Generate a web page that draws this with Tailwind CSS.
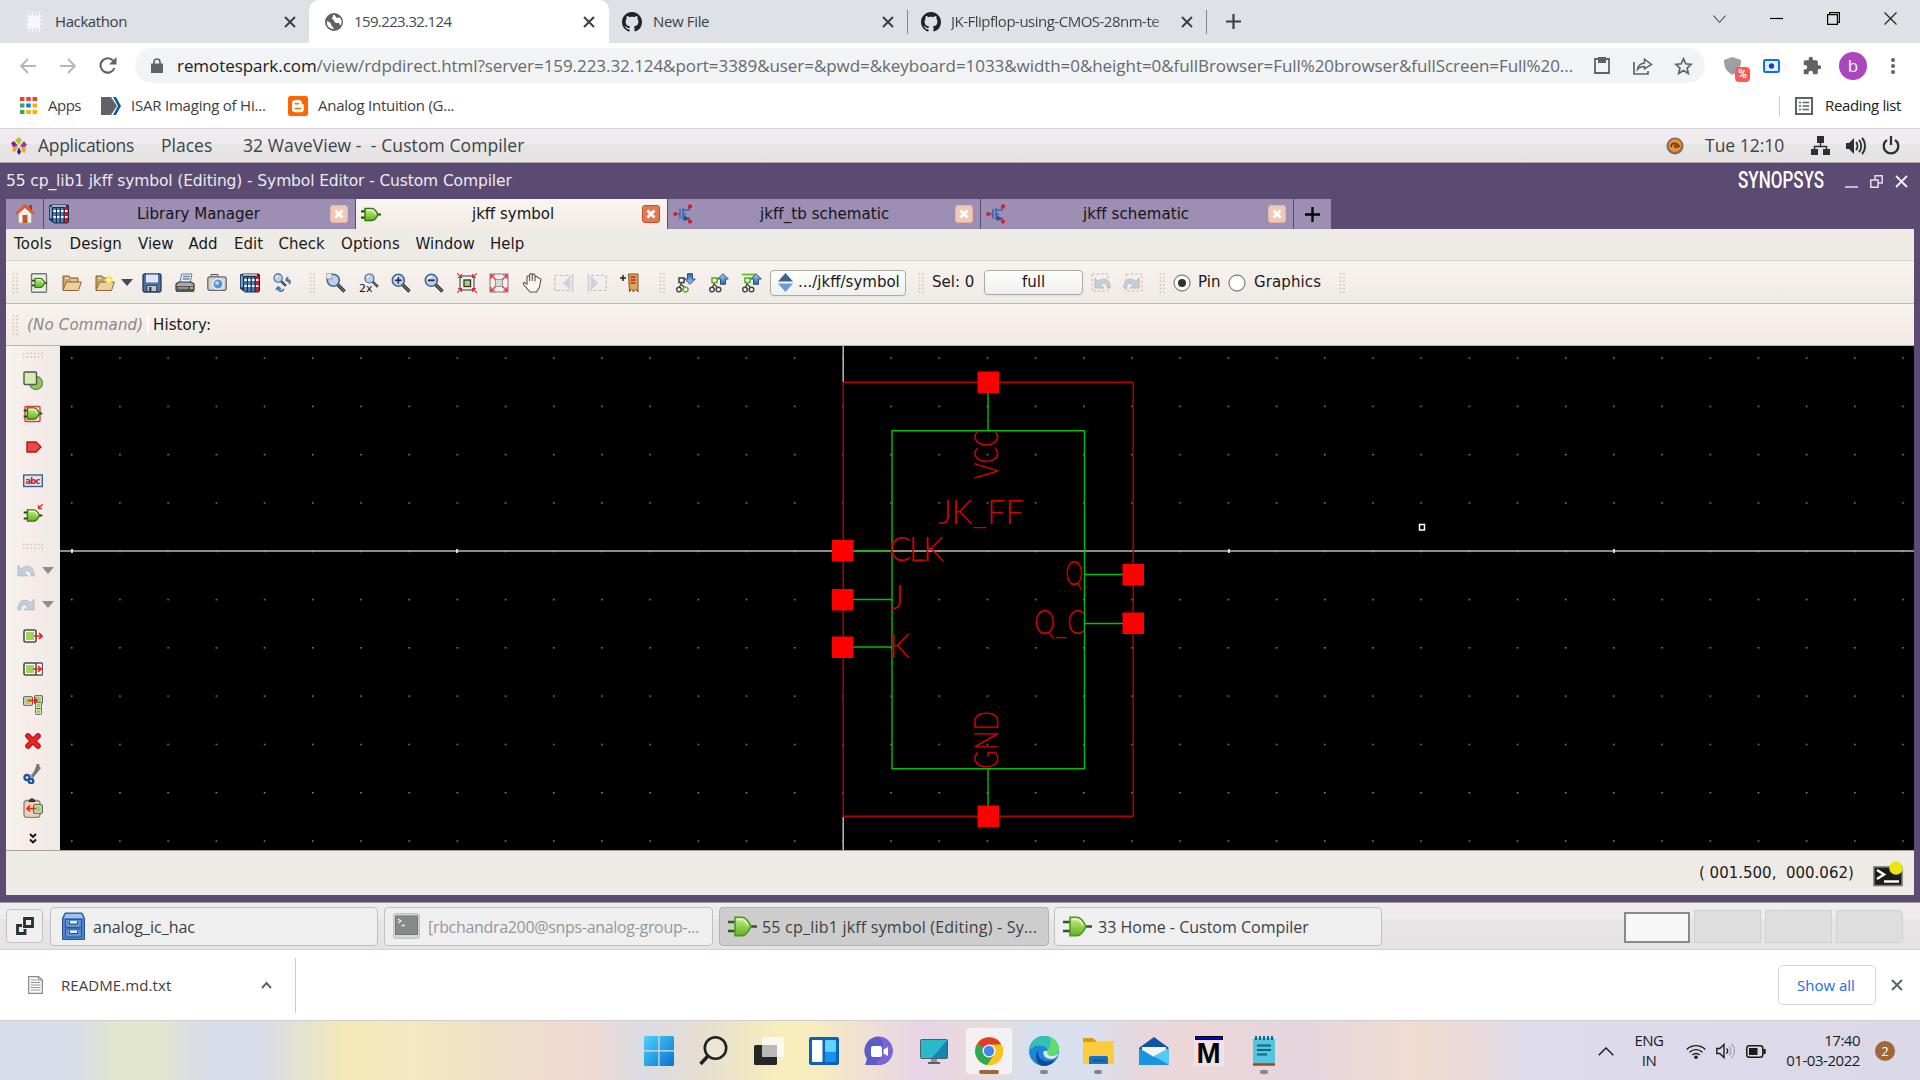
<!DOCTYPE html>
<html lang="en">
<head>
<meta charset="utf-8">
<title>159.223.32.124</title>
<script src="https://cdn.jsdelivr.net/npm/@tailwindcss/browser@4"></script>
</head>
<body class="w-[1920px] h-[1080px] overflow-hidden bg-white">
<svg class="absolute size-0">
  <defs>
    <linearGradient id="gGreen" x1="0" y1="0" x2="0" y2="1"><stop offset="0" stop-color="#c8f08a"/><stop offset="1" stop-color="#63b01e"/></linearGradient>
    <linearGradient id="gBlue" x1="0" y1="0" x2="0" y2="1"><stop offset="0" stop-color="#a8c8ec"/><stop offset="1" stop-color="#2f6aa8"/></linearGradient>
    <linearGradient id="gWin" x1="0" y1="0" x2="1" y2="1"><stop offset="0" stop-color="#4fd2fb"/><stop offset="1" stop-color="#0572d2"/></linearGradient>
  </defs>
  <symbol id="x" viewBox="0 0 12 12"><path d="M1 1l10 10M11 1L1 11" stroke="currentColor" stroke-width="2" fill="none"/></symbol>
  <symbol id="github" viewBox="0 0 16 16"><path fill="#1f2328" d="M8 0C3.58 0 0 3.58 0 8c0 3.54 2.29 6.53 5.47 7.59.4.07.55-.17.55-.38 0-.19-.01-.82-.01-1.49-2.01.37-2.53-.49-2.69-.94-.09-.23-.48-.94-.82-1.13-.28-.15-.68-.52-.01-.53.63-.01 1.08.58 1.23.82.72 1.21 1.87.87 2.33.66.07-.52.28-.87.51-1.07-1.78-.2-3.64-.89-3.64-3.95 0-.87.31-1.59.82-2.15-.08-.2-.36-1.02.08-2.12 0 0 .67-.21 2.2.82.64-.18 1.32-.27 2-.27s1.36.09 2 .27c1.53-1.04 2.2-.82 2.2-.82.44 1.1.16 1.92.08 2.12.51.56.82 1.27.82 2.15 0 3.07-1.87 3.75-3.65 3.95.29.25.54.73.54 1.48 0 1.07-.01 1.93-.01 2.2 0 .21.15.46.55.38A8.01 8.01 0 0016 8c0-4.42-3.58-8-8-8z"/></symbol>
  <symbol id="tabx" viewBox="0 0 18 18"><rect x=".5" y=".5" width="17" height="17" rx="2.500" fill="#e07a50" stroke="#cc4a32"/><path d="M5.500 5.500l7 7M12.500 5.500l-7 7" stroke="#fff" stroke-width="2.800"/></symbol>
  <symbol id="tabxoff" viewBox="0 0 18 18"><rect x=".5" y=".5" width="17" height="17" rx="2.500" fill="#efc8b6" stroke="#e6b3a8"/><path d="M5.500 5.500l7 7M12.500 5.500l-7 7" stroke="#fff" stroke-width="2.800"/></symbol>
  <symbol id="gate" viewBox="0 0 20 14"><path d="M0 3.800h5M0 10.200h5M14 7h6" stroke="#1f4a0e" stroke-width="2.200"/><path d="M4 .9h7c3 0 4.500 3 6 6.100-1.500 3.100-3 6.100-6 6.100H4z" fill="url(#gGreen)" stroke="#2f7a0c" stroke-width="1.500"/><path d="M5.800 2.600h5c1.800 0 3 1.600 4 4.400" stroke="#effcd8" stroke-width="1.200" fill="none"/></symbol>
  <symbol id="mos" viewBox="0 0 20 20"><path d="M3 10h4M7 5v10M10 4v12M10 6h6V2M10 14h6v4M10 10h3" stroke="#3a68b0" stroke-width="1.600" fill="none"/><path d="M11 11l5 4-5 2z" fill="#2b4d90"/><circle cx="2.300" cy="10" r="2.100" fill="#dc1c24"/><circle cx="17" cy="2.400" r="2.100" fill="#dc1c24"/><circle cx="17" cy="17.600" r="2.100" fill="#dc1c24"/></symbol>
  <symbol id="books" viewBox="0 0 20 20"><path d="M0 1.500L3 .5h16l1 1.500v16l-1.500 1.500H5L0 15.500z" fill="#1c2d48"/><path d="M1.800 2.500v12" stroke="#7fa9d8" stroke-width="2"/><path d="M5.500 4v14.500M9.300 4v14.500M13.100 4v14.500" stroke="#4a80c0" stroke-width="2.500"/><path d="M17.200 3v15.500" stroke="#de1a22" stroke-width="3"/><path d="M4.300 7h2.500M8 7h2.500M12 7h2.500M16 7h2.500M4.300 13h2.500M8 13h2.500M12 13h2.500M16 13h2.500" stroke="#fff" stroke-width="1.800"/><path d="M3 2h14" stroke="#d7dfe8" stroke-width="1.500"/></symbol>
  <symbol id="folder" viewBox="0 0 20 18"><path d="M1 16V2h6l1.500 2H16v4" fill="#c9a56c" stroke="#7d5f33"/><path d="M1 16.500L4.500 8H19.300l-2.800 8.500z" fill="#edcf97" stroke="#8a6a3c"/><path d="M3 4h4M9 6h6" stroke="#f7eedb"/></symbol>
  <symbol id="mag" viewBox="0 0 20 20"><path d="M11.500 11.500l7 7" stroke="#333" stroke-width="3.400"/><path d="M12 12l6 6" stroke="#999" stroke-width="1"/><circle cx="7.300" cy="7.300" r="6" fill="#b9d1ee" stroke="#4a6488" stroke-width="1.600"/><path d="M4 6.500a3.600 3.600 0 0 1 3.300-2.700" stroke="#fff" stroke-width="1.500" fill="none"/></symbol>
  <symbol id="tree" viewBox="0 0 20 20"><path d="M5 7v4M5 11l-2 4M5 11l4 4" stroke="#444" stroke-width="1.300" fill="none"/><rect x="3" y="5" width="5" height="4.500" fill="#fff" stroke="currentColor" stroke-width="1.600"/><circle cx="3" cy="16.500" r="2.300" fill="#fff" stroke="#444" stroke-width="1.500"/><circle cx="9.500" cy="16.500" r="2.300" fill="#fff" stroke="#444" stroke-width="1.500"/></symbol>
  <symbol id="aup" viewBox="0 0 12 12"><path d="M6 .7L11.300 6H8.500v5.300h-5V6H.700z" fill="url(#gBlue)" stroke="#27507f"/></symbol>
  <symbol id="undo" viewBox="0 0 20 14"><path d="M1 1v12h11L8 9.500C11 6 15 6 16 13h3C20 3 11-1 5 5z" fill="#c3cedb" stroke="#a9b4c4" stroke-width=".8"/></symbol>
  <symbol id="grip" viewBox="0 0 6 20"><path d="M1.500 0v20M5 0v20" stroke="#c9c3bb" stroke-width="1.500" stroke-dasharray="1.500 2.200"/></symbol>
  <symbol id="hgrip" viewBox="0 0 20 6"><path d="M0 1.500h20M0 5h20" stroke="#c9c3bb" stroke-width="1.500" stroke-dasharray="1.500 2.200"/></symbol>
  <symbol id="gbox" viewBox="0 0 14 14"><rect x="1" y="1" width="12" height="12" rx="1.500" fill="#fff" stroke="#4a4a4a" stroke-width="1.600"/><rect x="3" y="3" width="8" height="8" fill="#9fd45a"/></symbol>
  <symbol id="biggate" viewBox="0 0 29 21"><path d="M0 6h9M0 15h9M20 10.500h9" stroke="#2f5a18" stroke-width="2.600"/><path d="M7 1.200h7c4 0 7 5 9 9.300-2 4.300-5 9.300-9 9.300H7z" fill="url(#gGreen)" stroke="#4a9a20" stroke-width="1.600"/><path d="M9 3.500h5c2.500 0 5 3.500 6 6" stroke="#effcd8" stroke-width="1.600" fill="none"/></symbol>
</svg>

<!-- browser tab strip -->
<div class="flex h-[43px] bg-[#dee1e6] font-['Open_Sans',sans-serif] text-[15px] text-[#3c4043]">
  <div class="flex w-[309px] items-center rounded-br-lg pl-[25px]">
    <svg class="h-5 w-[18px]" viewBox="0 0 18 20"><path d="M4 0v20M7.500 0v20M11 0v20M14.500 0v20M0 4h18M0 8h18M0 12h18M0 16h18" stroke="#f6f4fc"/><rect x="3" y="4" width="12" height="12" fill="#f8f6fd"/></svg>
    <span class="ml-3 w-[71px] whitespace-nowrap tracking-[-0.4px]">Hackathon</span>
    <svg class="ml-[158px] size-[12px]"><use href="#x"/></svg>
  </div>
  <div class="flex w-[300px] items-center rounded-t-[10px] bg-white pl-4">
    <svg class="size-[18px]" viewBox="0 0 18 18"><circle cx="9" cy="9" r="9" fill="#5f6368"/><path d="M2 8c2 1 3 1 4 3 0 2 2 2 3 5-4 0-8-3-7-8zM8 2c3 0 2 2 4 3 1 0 2-1 3 0 2 2 2 4 1 7-2 0-1-2-3-2-2 0-3 0-4-2 0-2-2-1-2-3 1-1 1-2 1-3z" fill="#fff"/></svg>
    <span class="ml-[11px] w-[98px] whitespace-nowrap tracking-[-0.62px] text-[#45494d]">159.223.32.124</span>
    <svg class="ml-[131px] size-[12px]"><use href="#x"/></svg>
  </div>
  <div class="flex w-[298px] items-center pl-[13px]">
    <svg class="size-5"><use href="#github"/></svg>
    <span class="ml-[11px] w-[56px] whitespace-nowrap tracking-[-0.35px]">New File</span>
    <svg class="ml-[173px] size-[12px]"><use href="#x"/></svg>
  </div>
  <div class="flex w-[300px] items-center">
    <div class="h-6 w-px bg-[#80868b]"></div>
    <svg class="ml-[13px] size-5"><use href="#github"/></svg>
    <span class="ml-[10px] w-[222px] whitespace-nowrap bg-linear-to-r from-[#3c4043] from-90% to-transparent bg-clip-text tracking-[-0.5px] text-transparent">JK-Flipflop-using-CMOS-28nm-te</span>
    <svg class="ml-[8px] size-[12px]"><use href="#x"/></svg>
    <div class="ml-[13px] h-6 w-px bg-[#80868b]"></div>
  </div>
  <div class="flex flex-1 items-center pl-[19px]">
    <svg class="size-[15px]" viewBox="0 0 15 15"><path d="M7.500 0v15M0 7.500h15" stroke="#3c4043" stroke-width="2.200"/></svg>
  </div>
  <div class="flex w-[214px] items-start gap-[44px] pt-3">
    <svg class="mt-px ml-[7px] h-3 w-[13px]" viewBox="0 0 13 12"><path d="M.5 2.500l6 7 6-7" fill="none" stroke="#222"/></svg>
    <svg class="h-3 w-[13px]" viewBox="0 0 13 12"><path d="M0 6.500h13" stroke="#000" stroke-width="1.200"/></svg>
    <svg class="h-[13px] w-[13px]" viewBox="0 0 13 13"><path d="M.6 2.600h9.800v9.800H.6zM2.600 2.600V.6h9.800v9.800h-2" fill="none" stroke="#000" stroke-width="1.200"/></svg>
    <svg class="h-[13px] w-[13px]" viewBox="0 0 13 13"><path d="M.5.5l12 12M12.500.5l-12 12" stroke="#222" stroke-width="1.200"/></svg>
  </div>
</div>

<!-- address bar -->
<div class="flex h-[45px] items-center pl-5 font-['Open_Sans',sans-serif]">
  <svg class="h-4 w-4" viewBox="0 0 16 16"><path d="M16 8H1M8 1L1 8l7 7" fill="none" stroke="#b4b6b9" stroke-width="1.800"/></svg>
  <svg class="ml-6 h-4 w-4" viewBox="0 0 16 16"><path d="M0 8h15M8 1l7 7-7 7" fill="none" stroke="#b4b6b9" stroke-width="1.800"/></svg>
  <svg class="ml-[23px] h-[17px] w-[18px]" viewBox="0 0 18 17"><path d="M15.500 11A7.200 7.200 0 1 1 14 3.500" fill="none" stroke="#5f6368" stroke-width="2.100"/><path d="M17.500 0v7.500H10z" fill="#5f6368"/></svg>
  <div class="ml-[18px] flex h-[35px] w-[1570px] items-center rounded-full bg-[#f1f3f4] pl-4">
    <svg class="h-[15px] w-[12px]" viewBox="0 0 12 15"><path d="M0 5.500h12V15H0z" fill="#5f6368"/><path d="M3 6V4a3 3 0 0 1 6 0v2" fill="none" stroke="#5f6368" stroke-width="1.600"/></svg>
    <span class="ml-[14px] w-[1395px] whitespace-nowrap text-[17px] tracking-[-0.06px] text-[#65696e]"><span class="text-[#202124]">remotespark.com</span>/view/rdpdirect.html?server=159.223.32.124&amp;port=3389&amp;user=&amp;pwd=&amp;keyboard=1033&amp;width=0&amp;height=0&amp;fullBrowser=Full%20browser&amp;fullScreen=Full%20...</span>
    <svg class="ml-[22px] h-[17px] w-[16px]" viewBox="0 0 16 17"><path d="M1 2h14v14H1z" fill="none" stroke="#5f6368" stroke-width="1.800"/><path d="M4 0h8v6H4z" fill="#5f6368"/></svg>
    <svg class="ml-[23px] h-[18px] w-[20px]" viewBox="0 0 20 18"><path d="M1 5v12h14v-3" fill="none" stroke="#5f6368" stroke-width="1.700"/><path d="M4.500 12.500c.5-4 3-6 7-6.500V2.200L18.500 7.500 11.500 12V9.500c-3 0-5 .5-7 3z" fill="none" stroke="#5f6368" stroke-width="1.500"/></svg>
    <svg class="ml-[21px] h-[18px] w-[19px]" viewBox="0 0 19 18"><path d="M9.500 1.800l2.300 5 5.300.6-4 3.600 1.200 5.500-4.800-2.900-4.800 2.900 1.200-5.500-4-3.600 5.300-.6z" fill="none" stroke="#5f6368" stroke-width="1.700"/></svg>
  </div>
  <div class="relative mt-1 ml-[19px] h-[22px] w-[26px]">
    <svg class="h-[18px] w-[17px]" viewBox="0 0 17 18"><path d="M8.500 0L17 3c0 8-3 12-8.500 15C3 15 0 11 0 3z" fill="#9aa0a6"/></svg>
    <div class="absolute top-[10px] left-[11px] flex h-[15px] w-[15px] items-center justify-center rounded-sm bg-[#fb5a55] font-['Roboto',sans-serif] text-[12px] leading-none font-bold text-white">%</div>
  </div>
  <svg class="ml-[13px] h-[14px] w-[17px]" viewBox="0 0 17 14"><rect x="1" y="1" width="15" height="12" rx="1.500" fill="#e4f0ff" stroke="#0e71eb" stroke-width="2"/><circle cx="8.500" cy="7" r="2.700" fill="#1d3fbe"/></svg>
  <svg class="ml-[22px] h-[20px] w-[20px]" viewBox="0 0 24 24"><path fill="#5f6368" d="M20.500 11H19V7a2 2 0 0 0-2-2h-4V3.500a2.500 2.500 0 0 0-5 0V5H4a2 2 0 0 0-2 2v3.800h1.500a2.700 2.700 0 0 1 0 5.400H2V20c0 1.100.9 2 2 2h3.800v-1.500a2.700 2.700 0 0 1 5.400 0V22H17a2 2 0 0 0 2-2v-4h1.500a2.500 2.500 0 0 0 0-5z"/></svg>
  <div class="ml-[17px] flex size-7 items-center justify-center rounded-full bg-[#ab47bc] text-[17px] leading-none text-white">b</div>
  <svg class="ml-6 h-4 w-[4px]" viewBox="0 0 4 16"><circle cx="2" cy="2" r="2" fill="#5f6368"/><circle cx="2" cy="8" r="2" fill="#5f6368"/><circle cx="2" cy="14" r="2" fill="#5f6368"/></svg>
</div>

<!-- bookmarks -->
<div class="flex h-[41px] items-center border-b border-[#d4d4d6] pb-[5px] pl-5 font-['Open_Sans',sans-serif] text-[15px] text-[#3c4043]">
  <svg class="h-[17px] w-[17px]" viewBox="0 0 17 17"><path d="M0 2h17" stroke="#ea4335" stroke-width="4" stroke-dasharray="4.500 1.750"/><path d="M0 8.500h4.500" stroke="#34a853" stroke-width="4"/><path d="M6.250 8.500h4.500" stroke="#1a73e8" stroke-width="4"/><path d="M12.500 8.500H17M6.250 15h4.500M12.500 15H17" stroke="#fbaf04" stroke-width="4"/><path d="M0 15h4.500" stroke="#34a853" stroke-width="4"/></svg>
  <span class="ml-[11px] w-[33px] whitespace-nowrap tracking-[-0.5px]">Apps</span>
  <svg class="ml-5 h-[18px] w-[20px]" viewBox="0 0 20 18"><path d="M0 0h10l6 9-6 9H0z" fill="#5f6368"/><path d="M12 0h3l5 9-5 9h-3l5-9z" fill="#0c5aa6"/></svg>
  <span class="ml-[10px] w-[137px] whitespace-nowrap tracking-[-0.22px]">ISAR Imaging of Hi...</span>
  <svg class="ml-[20px] size-5" viewBox="0 0 20 20"><rect width="20" height="20" rx="2.500" fill="#ff6600"/><path d="M7 4h3.500a3.500 3.500 0 0 1 3.500 3.500c0 1 1.800 0 1.800 2V13a3.300 3.300 0 0 1-3.300 3.300H7.300A3.300 3.300 0 0 1 4 13V7a3 3 0 0 1 3-3z" fill="#fff"/><path d="M7.300 7.800h3M7.300 12.500h5" stroke="#ff6600" stroke-width="1.500" stroke-linecap="round"/></svg>
  <span class="ml-[10px] w-[136px] whitespace-nowrap tracking-[-0.26px]">Analog Intuition (G...</span>
  <div class="ml-auto h-5 w-px bg-[#c8cacd]"></div>
  <svg class="ml-[15px] h-[18px] w-[18px]" viewBox="0 0 18 18"><rect x="1" y="1" width="16" height="16" fill="none" stroke="#5f6368" stroke-width="2"/><path d="M4 5.500h2M4 9h2M4 12.500h2M7.500 5.500H14M7.500 9H14M7.500 12.500H14" stroke="#5f6368" stroke-width="1.600"/></svg>
  <span class="mr-[20px] ml-3 w-[75px] whitespace-nowrap tracking-[-0.35px] text-[#202124]">Reading list</span>
</div>

<!-- desktop top panel -->
<div class="flex h-[34px] items-center border-b border-[#a9a8a9] bg-linear-to-b from-[#efebee] from-45% via-[#e6e6e6] via-46% to-[#e6e2e5] pl-[10px] font-['Open_Sans',sans-serif] text-[17.500px] text-[#3d4447]">
  <svg class="h-[18px] w-[18px]" viewBox="0 0 18 18"><path d="M9 8L5 3l4-3 3 3z" fill="#b0c93b"/><path d="M8 9L3 10 1 6l3-2z" fill="#932279"/><path d="M10 9l4-5 3 4-3 3z" fill="#9b3f94"/><path d="M8 10l-3 5-3-1 1-4z" fill="#e8a91f"/><path d="M11 10l5 1-1 5-3-1z" fill="#efa724"/><path d="M9 10l2 5-2 3-2-3z" fill="#262577"/></svg>
  <span class="ml-[10px] w-[95px] whitespace-nowrap tracking-[-0.3px]">Applications</span>
  <span class="ml-7 w-[51px] whitespace-nowrap">Places</span>
  <span class="ml-[31px] w-[283px] whitespace-pre tracking-[0.09px]">32 WaveView -  - Custom Compiler</span>
  <svg class="ml-auto size-[18px]" viewBox="0 0 18 18"><circle cx="9" cy="9" r="8.500" fill="#77706a"/><circle cx="9" cy="8.500" r="6.500" fill="#ee8f2c"/><path d="M5 10c0-4 5-5 7-2-2-1-4 0-3 2 2 1 4 0 4-2" stroke="#6a3c10" stroke-width="1.600" fill="none"/></svg>
  <span class="ml-[21px] w-[81px] whitespace-nowrap">Tue 12:10</span>
  <svg class="ml-[25px] h-[19px] w-[19px]" viewBox="0 0 19 19"><path d="M6 0h7v7H6zM0 13h7v6H0zM12 13h7v6h-7z" fill="#2a3133"/><path d="M9.500 7v3.500M3.500 13v-2.500h12V13" stroke="#2a3133" stroke-width="1.500" fill="none"/></svg>
  <svg class="ml-4 h-[18px] w-[20px]" viewBox="0 0 20 18"><path d="M0 6h3l5-5v16l-5-5H0z" fill="#2a3133"/><path d="M10 5c2 2 2 6 0 8M13 3c3 3 3 9 0 12M16 1c4 4 4 12 0 16" stroke="#2a3133" stroke-width="1.800" fill="none"/></svg>
  <svg class="mr-[20px] ml-4 h-[19px] w-[18px]" viewBox="0 0 18 19"><path d="M5 4a7.300 7.300 0 1 0 8 0M9 0v9" stroke="#2a3133" stroke-width="2.300" fill="none"/></svg>
</div>

<!-- Custom Compiler window -->
<div class="flex h-[739px] flex-col border-x-[6px] border-t border-b-[7px] border-[#5b4a72] bg-[#eeebe7] font-['DejaVu_Sans',sans-serif] text-[15px] text-[#1a1a1a]">
  <div class="flex h-[35px] items-center bg-[#5b4a72] text-[15.500px] text-[#eceaf0]">
    <span class="w-[506px] whitespace-nowrap tracking-[-0.12px]">55 cp_lib1 jkff symbol (Editing) - Symbol Editor - Custom Compiler</span>
    <svg class="ml-auto h-[30px] w-[90px]" viewBox="0 0 90 30"><text x="2" y="21" textLength="86" lengthAdjust="spacingAndGlyphs" font-family="Roboto, sans-serif" font-weight="500" font-size="23" fill="#fff">SYNOPSYS</text></svg>
    <svg class="ml-[19px] h-[13px] w-[13px]" viewBox="0 0 13 13"><path d="M0 12h13" stroke="#e4e0ea" stroke-width="1.500"/></svg>
    <svg class="ml-3 h-[13px] w-[13px]" viewBox="0 0 13 13"><path d="M.8 5h7.200v7.200H.8zM5 5V.8h7.200V8H8" fill="none" stroke="#e4e0ea" stroke-width="1.500"/></svg>
    <svg class="mr-[6px] ml-3 h-[13px] w-[13px]" viewBox="0 0 13 13"><path d="M1 1l11 11M12 1L1 12" stroke="#f4f2f6" stroke-width="1.800"/></svg>
  </div>
  <div class="flex h-[30px] gap-px bg-[#5b4a72] text-[15px] text-[#141414]">
    <div class="flex w-[37px] items-center justify-center bg-[#9d8eb4]">
      <svg class="size-5" viewBox="0 0 20 20"><path d="M3.500 9L10 3.500 16.500 9v10h-13z" fill="#f4f1ee" stroke="#aaa"/><path d="M14 1h3v5h-3z" fill="#b83a12"/><path d="M1 10L10 2l9 8" fill="none" stroke="#e0592a" stroke-width="3"/><path d="M7.500 11h5v8h-5z" fill="#c05a1c"/></svg>
    </div>
    <div class="flex w-[311px] items-center bg-[#9d8eb4] pl-[5px]">
      <svg class="size-5"><use href="#books"/></svg>
      <span class="mt-px ml-[68px] w-[125px] whitespace-nowrap">Library Manager</span>
      <svg class="ml-[68px] size-[18px]"><use href="#tabxoff"/></svg>
    </div>
    <div class="flex w-[311px] items-center bg-linear-to-b from-[#f8f5f1] to-[#f3ebe5] pl-[5px]">
      <svg class="h-[15px] w-[20px]"><use href="#gate"/></svg>
      <span class="mt-px ml-[91px] w-[81px] whitespace-nowrap">jkff symbol</span>
      <svg class="ml-[89px] size-[18px]"><use href="#tabx"/></svg>
    </div>
    <div class="flex w-[312px] items-center bg-[#9d8eb4] pl-[5px]">
      <svg class="size-5"><use href="#mos"/></svg>
      <span class="mt-px ml-[67px] w-[130px] whitespace-nowrap tracking-[0.08px]">jkff_tb schematic</span>
      <svg class="ml-[65px] size-[18px]"><use href="#tabxoff"/></svg>
    </div>
    <div class="flex w-[312px] items-center bg-[#9d8eb4] pl-[5px]">
      <svg class="size-5"><use href="#mos"/></svg>
      <span class="mt-px ml-[77px] w-[107px] whitespace-nowrap tracking-[0.08px]">jkff schematic</span>
      <svg class="ml-[78px] size-[18px]"><use href="#tabxoff"/></svg>
    </div>
    <div class="flex w-[37px] items-center justify-center bg-[#9d8eb4]">
      <svg class="size-[15px]" viewBox="0 0 15 15"><path d="M7.500 0v15M0 7.500h15" stroke="#000" stroke-width="2.300"/></svg>
    </div>
  </div>
  <div class="flex h-[32px] items-center gap-[15.500px] border-b border-[#d5d1cc] pl-[8px]">
    <span class="w-[40px] whitespace-nowrap tracking-[0.2px]">Tools</span>
    <span class="w-[53px] whitespace-nowrap tracking-[0.1px]">Design</span>
    <span class="w-[35px] whitespace-nowrap">View</span>
    <span class="w-[30px] whitespace-nowrap">Add</span>
    <span class="w-[29px] whitespace-nowrap">Edit</span>
    <span class="w-[47px] whitespace-nowrap">Check</span>
    <span class="w-[59px] whitespace-nowrap tracking-[0.15px]">Options</span>
    <span class="w-[59px] whitespace-nowrap">Window</span>
    <span class="w-[34px] whitespace-nowrap">Help</span>
  </div>
  <!-- main toolbar -->
  <div class="flex h-[43px] items-center border-b border-[#bdb9b4] bg-linear-to-b from-[#f7f4f0] via-[#f5eeea] to-[#eeebe6] pt-px pl-[6px]">
    <svg class="h-5 w-[6px]"><use href="#grip"/></svg>
    <div class="ml-[5px] grid w-[98px] grid-cols-3 justify-items-center">
      <svg class="size-5" viewBox="0 0 20 20"><rect x="2.500" y=".8" width="15" height="18.400" rx="1" fill="#eee" stroke="#777" stroke-width="1.400"/><use href="#gate" x="3" y="4.500" width="15" height="11"/></svg>
      <svg class="size-5"><use href="#folder"/></svg>
      <svg class="size-5" viewBox="0 0 20 20"><use href="#folder" width="20" height="20"/><circle cx="14" cy="7" r="3.600" fill="#fbe14a"/><circle cx="14" cy="7" r="1.500" fill="#fff"/></svg>
    </div>
    <svg class="mr-[3px] h-[7px] w-[12px]" viewBox="0 0 12 7"><path d="M0 0h12L6 7z" fill="#4a4a4a"/></svg>
    <div class="grid w-[163px] grid-cols-5 justify-items-center">
      <svg class="size-5" viewBox="0 0 20 20"><rect x="1" y="1" width="18" height="18" rx="1.500" fill="#4b6f9e" stroke="#243b5e" stroke-width="1.300"/><path d="M4 1.500h12v8H4z" fill="#dde7f2"/><path d="M5 12.500h9.500v6H5z" fill="#c7c7c4" stroke="#333" stroke-width=".8"/><path d="M7 14h2.500v4H7z" fill="#2c3f66"/></svg>
      <svg class="size-5" viewBox="0 0 20 20"><path d="M5 10L6.500 1H17l-2 9z" fill="#f1f6fc" stroke="#777"/><path d="M8 3.500h7M7.500 6h7" stroke="#5a87bd" stroke-width="1.400"/><path d="M1 11l3-2h12l3 2v6H1z" fill="#aaa" stroke="#333" stroke-width="1.200"/><path d="M1 13h18v6H1z" fill="#555"/><path d="M3 15h10" stroke="#ccc"/><path d="M15 14h3v2h-3z" fill="#7ddc2c"/></svg>
      <svg class="size-5" viewBox="0 0 20 20"><path d="M4 4V1.500h7V4" fill="#ddd" stroke="#555"/><rect x=".8" y="3.800" width="18.400" height="13.500" rx="2" fill="#d4d4d2" stroke="#666" stroke-width="1.300"/><circle cx="11" cy="11" r="5.200" fill="#5b8fd0" stroke="#e9eef6" stroke-width="1.500"/><circle cx="10" cy="10" r="2" fill="#b8d5f6"/></svg>
      <svg class="size-5"><use href="#books"/></svg>
      <svg class="size-5" viewBox="0 0 20 20"><use href="#mag" width="14" height="14"/><path d="M14 7c3-1 4 2 2 4M15 4l-2 3 3 2M5 15c1 4 4 4 6 1M3 17l2-3 3 2" stroke="#4b78b4" stroke-width="1.700" fill="none"/></svg>
    </div>
    <svg class="mr-[5px] ml-[10px] h-5 w-[6px]"><use href="#grip"/></svg>
    <div class="grid w-[326px] grid-cols-10 justify-items-center">
      <svg class="size-5" viewBox="0 0 20 20"><use href="#mag" width="20" height="20"/><path d="M0 0h6v6H0z" fill="#e8e8e6" stroke="#888"/></svg>
      <svg class="size-5 overflow-visible" viewBox="0 0 20 20"><use href="#mag" x="5" width="15" height="15"/><text x="0" y="19" font-size="11" font-family="DejaVu Sans, sans-serif" fill="#111">2x</text></svg>
      <svg class="size-5" viewBox="0 0 20 20"><use href="#mag" width="20" height="20"/><path d="M7.300 4v6.600M4 7.300h6.600" stroke="#1c2c48" stroke-width="1.600"/></svg>
      <svg class="size-5" viewBox="0 0 20 20"><use href="#mag" width="20" height="20"/><path d="M4 7.300h6.600" stroke="#1c2c48" stroke-width="1.800"/></svg>
      <svg class="size-5" viewBox="0 0 20 20"><rect x="3" y="3" width="14" height="14" fill="#eef0ea" stroke="#777" stroke-width="1.500"/><rect x="7" y="7" width="6.500" height="6.500" fill="#a9d46a" stroke="#333" stroke-width="1.300"/><path d="M0 0l4 4M20 0l-4 4M0 20l4-4M20 20l-4-4M4.500 1V4.500H1M15.500 1v3.500H19M4.500 19v-3.500H1M15.500 19v-3.500H19" stroke="#e8262a" stroke-width="1.100" fill="none"/></svg>
      <svg class="size-5" viewBox="0 0 20 20"><rect x="1" y="1" width="18" height="18" fill="#f4efea" stroke="#999" stroke-width="1.300"/><rect x="6.500" y="6.500" width="7" height="7" fill="#d8d8d6" stroke="#999"/><path d="M2 2l4.500 4.500M18 2l-4.500 4.500M2 18l4.500-4.500M18 18l-4.500-4.500M2 6V2h4M18 6V2h-4M2 14v4h4M18 14v4h-4" stroke="#e8262a" stroke-width="1.200" fill="none"/></svg>
      <svg class="size-5" viewBox="0 0 20 20"><path d="M5 11V4a1.300 1.300 0 0 1 2.600 0v4V2a1.300 1.300 0 0 1 2.700 0v6V2.500a1.300 1.300 0 0 1 2.700 0V8.500V4.500a1.300 1.300 0 0 1 2.600 0L19 6l-1.500 8-3 5H8l-6-7c-2-3 1-3 3-1z" fill="#fbf6ef" stroke="#5d554c" stroke-width="1.100"/></svg>
      <svg class="size-5 opacity-60" viewBox="0 0 20 20"><rect x=".7" y="2.500" width="15" height="15" fill="none" stroke="#999" stroke-width="1.200" stroke-dasharray="3 2"/><path d="M16 3v14L9 10z" fill="#b4bfd0"/><path d="M18.500 1v18" stroke="#b4bfd0" stroke-width="2"/></svg>
      <svg class="size-5 opacity-60" viewBox="0 0 20 20"><rect x="4.300" y="2.500" width="15" height="15" fill="none" stroke="#999" stroke-width="1.200" stroke-dasharray="3 2"/><path d="M4 3v14l7-7z" fill="#b4bfd0"/><path d="M1.500 1v18" stroke="#b4bfd0" stroke-width="2"/></svg>
      <svg class="size-5" viewBox="0 0 20 20"><path d="M0 5h6M3 2v6" stroke="#222" stroke-width="1.500"/><path d="M8.500 1h9.500v18l-2.500-3-2 3-2-3-2 3z" fill="#dca75c" stroke="#7d5526"/><path d="M10.500 4h5M10.500 7h5M10.500 10h5" stroke="#d41c1c" stroke-width="1.700"/></svg>
    </div>
    <svg class="mr-[5px] ml-[13px] h-5 w-[6px]"><use href="#grip"/></svg>
    <div class="grid w-[98px] grid-cols-3 justify-items-center text-[#444]">
      <svg class="size-5" viewBox="0 0 20 20"><use href="#tree" width="20" height="20"/><circle cx="9.500" cy="16.500" r="2.300" fill="#fff" stroke="#6cc024" stroke-width="1.500"/><use href="#aup" x="8" y="0" width="12" height="12" transform="rotate(180 14 6)"/></svg>
      <svg class="size-5 text-[#58b41c]" viewBox="0 0 20 20"><use href="#tree" width="20" height="20"/><use href="#aup" x="8" y="0" width="12" height="12"/></svg>
      <svg class="size-5 text-[#58b41c]" viewBox="0 0 20 20"><use href="#tree" width="20" height="20"/><path d="M0 1.500h13" stroke="#58c41c" stroke-width="1.800"/><use href="#aup" x="8" y="0" width="12" height="12"/></svg>
    </div>
    <div class="ml-[2px] flex h-[26px] w-[136px] items-center rounded border border-[#aca8a3] bg-linear-to-b from-white to-[#efefed] pl-[7px] shadow-xs">
      <svg class="h-[19px] w-[15px]" viewBox="0 0 15 19"><path d="M7.500 0L15 8.500H0z" fill="#3d6395"/><path d="M7.500 19L15 10.500H0z" fill="#6e9bd0"/></svg>
      <span class="ml-[5px] w-[102px] whitespace-nowrap">.../jkff/symbol</span>
    </div>
    <svg class="ml-3 h-5 w-[6px]"><use href="#grip"/></svg>
    <span class="ml-[8px] w-[42px] whitespace-nowrap">Sel: 0</span>
    <div class="ml-[10px] flex h-[25px] w-[99px] items-center rounded border border-[#aca8a3] bg-linear-to-b from-white to-[#efefed] pl-[37px] shadow-xs"><span class="w-[24px] whitespace-nowrap">full</span></div>
    <svg class="ml-2 size-5" viewBox="0 0 20 20"><rect x="1" y="1" width="16" height="17" fill="none" stroke="#eba4a0" stroke-dasharray="2.500 2"/><use href="#undo" x="3" y="4" width="17" height="12"/></svg>
    <svg class="ml-3 size-5" viewBox="0 0 20 20"><rect x="3" y="1" width="16" height="17" fill="none" stroke="#eba4a0" stroke-dasharray="2.500 2"/><use href="#undo" x="3" y="4" width="17" height="12" transform="matrix(-1 0 0 1 20 0)"/></svg>
    <svg class="ml-[16px] h-5 w-[6px]"><use href="#grip"/></svg>
    <svg class="ml-[8px] size-[18px]" viewBox="0 0 18 18"><circle cx="9" cy="9" r="8" fill="#fff" stroke="#8b8782" stroke-width="1.300"/><circle cx="9" cy="9" r="4" fill="#333"/></svg>
    <span class="ml-[7px] w-[24px] whitespace-nowrap">Pin</span>
    <svg class="ml-[6px] size-[18px]" viewBox="0 0 18 18"><circle cx="9" cy="9" r="8" fill="#fff" stroke="#8b8782" stroke-width="1.300"/></svg>
    <span class="ml-[8px] w-[68px] whitespace-nowrap tracking-[0.1px]">Graphics</span>
    <svg class="ml-[17px] h-5 w-[6px]"><use href="#grip"/></svg>
  </div>
  <div class="flex h-[42px] items-center border-b border-[#b8b4af] bg-linear-to-b from-[#f7f4f0] via-[#f6ede9] to-[#eeebe6] pt-px pl-[6px]">
    <svg class="h-5 w-[6px]"><use href="#grip"/></svg>
    <span class="ml-[9px] w-[117px] whitespace-nowrap tracking-[0.2px] text-[#888] italic">(No Command)</span>
    <div class="ml-[3px] h-[18px] w-[2px] bg-white"></div>
    <span class="ml-[4px] w-[60px] whitespace-nowrap tracking-[0.1px]">History:</span>
  </div>
  <div class="flex h-[504px]">
    <!-- left toolbar -->
    <div class="flex w-[54px] flex-col items-center bg-linear-to-r from-[#f6f3ee] via-[#f6ece9] via-45% to-[#eeebe6] pt-[6px] pr-[1px]">
      <svg class="h-[6px] w-5"><use href="#hgrip"/></svg>
      <div class="mt-[6px] grid h-[167px] grid-rows-5 items-center">
        <svg class="size-5" viewBox="0 0 20 20"><circle cx="13" cy="12" r="6.500" fill="#8fcb4c" stroke="#6a8a6a" stroke-width="1.300"/><rect x="1" y="1" width="12.500" height="12.500" rx="1" fill="#d3eeb2" stroke="#555" stroke-width="1.400"/></svg>
        <svg class="size-5" viewBox="0 0 20 20"><rect x="2" y="2.500" width="15" height="15" rx="1" fill="#fbe6e3" stroke="#e8383c" stroke-width="1.400"/><use href="#gate" y="3" width="20" height="13"/></svg>
        <svg class="size-5" viewBox="0 0 20 20"><path d="M4 5h9l5 5-5 5H4z" fill="#e84a4c" stroke="#b8141a" stroke-width="1.400"/></svg>
        <svg class="size-5" viewBox="0 0 20 20"><rect x=".7" y="4" width="18.600" height="11.500" fill="#dfe6f0" stroke="#44618c" stroke-width="1.400"/><text x="2.500" y="13" font-size="8.500" font-weight="700" textLength="15" font-family="DejaVu Sans, sans-serif" fill="#d0161c">abc</text></svg>
        <svg class="size-5" viewBox="0 0 20 20"><use href="#gate" y="5" width="20" height="13"/><path d="M20 0l-4.500 4M15.500 1v3.500H19" stroke="#f02020" stroke-width="1.200" fill="none"/></svg>
      </div>
      <svg class="mt-[12px] h-[6px] w-5"><use href="#hgrip"/></svg>
      <div class="mt-[15px] flex items-center gap-[7px] pl-[6px]"><svg class="h-[13px] w-[18px]"><use href="#undo"/></svg><svg class="h-[7px] w-[12px]" viewBox="0 0 12 7"><path d="M0 0h12L6 7z" fill="#918e8a"/></svg></div>
      <div class="mt-[21px] flex items-center gap-[7px] pl-[6px]"><svg class="h-[13px] w-[18px] -scale-x-100"><use href="#undo"/></svg><svg class="h-[7px] w-[12px]" viewBox="0 0 12 7"><path d="M0 0h12L6 7z" fill="#918e8a"/></svg></div>
      <svg class="mt-[15px] size-5" viewBox="0 0 20 20"><use href="#gbox" y="3" width="14" height="14"/><path d="M11 10h8M16 7l3 3-3 3" stroke="#f02020" stroke-width="1.700" fill="none"/></svg>
      <svg class="mt-[13px] size-5" viewBox="0 0 20 20"><rect x="12" y="4" width="7.500" height="12" rx="1" fill="#fff" stroke="#555" stroke-width="1.400"/><use href="#gbox" y="3" width="14" height="14"/><path d="M10 10h8M15 7l3 3-3 3" stroke="#f02020" stroke-width="1.700" fill="none"/></svg>
      <svg class="mt-[16px] size-5" viewBox="0 0 20 20"><use href="#gbox" y="1" width="10" height="10"/><use href="#gbox" x="11" y="0" width="9" height="9"/><use href="#gbox" x="12" y="7" width="7" height="7"/><use href="#gbox" x="12" y="13" width="7" height="7"/><path d="M5 5.500h9M11 2.500l3 3-3 3" stroke="#f02020" stroke-width="1.500" fill="none"/></svg>
      <svg class="mt-[16px] size-5" viewBox="0 0 20 20"><path d="M5 5l10 10M15 5L5 15" stroke="#b80c10" stroke-width="5.600" stroke-linecap="round"/><path d="M5 5l10 10M15 5L5 15" stroke="#e8262a" stroke-width="3.400" stroke-linecap="round"/></svg>
      <svg class="mt-[13px] size-5" viewBox="0 0 20 20"><path d="M15 0c0 5-3 9-6 13M17 3c-3 3-5 7-8 9" stroke="#777" stroke-width="3"/><circle cx="4" cy="13.500" r="2.500" fill="none" stroke="#1d57a0" stroke-width="2.400"/><circle cx="8" cy="17" r="2.300" fill="none" stroke="#1d57a0" stroke-width="2.400"/></svg>
      <svg class="mt-[14px] size-5" viewBox="0 0 20 20"><rect x="1" y="2.500" width="16" height="17" rx="3" fill="#ecd0b4" stroke="#888" stroke-width="1.400"/><path d="M6 3.500C6 0 12 0 12 3.500z" fill="#444" stroke="#222"/><use href="#gbox" x="10" y="6" width="10" height="10"/><path d="M13 10.500H4M7 7.500l-3 3 3 3" stroke="#f02020" stroke-width="1.600" fill="none"/></svg>
      <svg class="mt-[15px] h-[11px] w-[8px]" viewBox="0 0 8 11"><path d="M1 1l3 3 3-3M1 6.500l3 3 3-3" stroke="#111" stroke-width="1.900" fill="none"/></svg>
    </div>
    <!-- drawing canvas -->
    <svg class="h-[504px] w-[1854px] bg-black" viewBox="60 346 1854 504">
      <defs><pattern id="dots" x="71" y="357.300" width="48.190" height="48.300" patternUnits="userSpaceOnUse"><rect width="1.600" height="1.500" fill="#83839a"/></pattern></defs>
      <rect x="60" y="346" width="1854" height="504" fill="url(#dots)"/>
      <g stroke="#b9b9b9" stroke-width="1.500"><path d="M60 551h1854M843.200 346v36M843.200 817v33"/><path stroke="#fff" d="M72 549v4M457 549v4M1229 549v4M1614 549v4"/></g>
      <path d="M843.200 382.200h290v434h-290z" fill="none" stroke="#b80000" stroke-width="1.400"/>
      <path d="M892 430.700h192.500v338H892zM988 392v39M988 768v40M853 551h39M853 599.500h39M853 647h39M1085 574.500h40M1085 623.500h40" fill="none" stroke="#00c000" stroke-width="1.400"/>
      <path d="M977.500 371.500h21.500v21.500h-21.500zM977.500 805.500h21.500v21.500h-21.500zM832 540h21.500v21.500H832zM832 589h21.500v21.500H832zM832 636.500h21.500v21.500H832zM1122.500 564h21.500v21.500h-21.500zM1122.500 612.500h21.500v21.500h-21.500z" fill="#f00"/>
      <g fill="#d80000" font-family="Lato, Roboto, sans-serif" font-weight="300" font-size="33">
        <text x="938" y="524" textLength="86">JK_FF</text>
        <text x="889" y="561" textLength="55">CLK</text>
        <text x="890" y="609" textLength="13">J</text>
        <text x="889" y="658" textLength="19">K</text>
        <text x="1065" y="585" textLength="18" lengthAdjust="spacingAndGlyphs">Q</text>
        <text x="1034" y="634" textLength="51" lengthAdjust="spacingAndGlyphs">Q_C</text>
        <text transform="translate(998 479) rotate(-90)" textLength="49" lengthAdjust="spacingAndGlyphs">VCC</text>
        <text transform="translate(998 769) rotate(-90)" textLength="58" lengthAdjust="spacingAndGlyphs">GND</text>
      </g>
      <rect x="1419.500" y="524.500" width="5" height="5.500" fill="#000" stroke="#fff" stroke-width="1.500"/>
    </svg>
  </div>
  <div class="flex flex-1 items-center justify-end border-t border-[#a9a19d] pt-px pr-[10px]">
    <span class="w-[162px] whitespace-pre">( 001.500,  000.062)</span>
    <svg class="ml-3 h-[26px] w-[31px]" viewBox="0 0 31 26"><rect x="1" y="6" width="28" height="18.500" fill="#1b1b1b" stroke="#777" stroke-width="1.600"/><path d="M4 9l7 4.500L4 18" stroke="#fff" stroke-width="2.500" fill="none"/><path d="M11 20.500h15" stroke="#fff" stroke-width="2.500"/><circle cx="23" cy="7" r="6.800" fill="#ebe512"/></svg>
  </div>
</div>

<!-- desktop task list -->
<div class="flex h-[48px] items-center border-y border-t-[#999] border-b-[#d4d2d4] bg-linear-to-b from-[#efebee] from-35% via-[#e6e6e6] via-36% to-[#e6e2e5] pl-[6px] font-['Open_Sans',sans-serif] text-[16px] text-[#3a4144]">
  <div class="flex h-[34px] w-[37px] items-center justify-center rounded border border-[#c2c0c2] bg-[#efefef]"><svg class="h-[18px] w-[18px]" viewBox="0 0 18 18"><path d="M8.500 1.500h8v8h-8z" fill="none" stroke="#2a3133" stroke-width="2.800"/><path d="M6 8.500H1.500v8H9V12" fill="none" stroke="#2a3133" stroke-width="2.800"/></svg></div>
  <div class="ml-[7px] flex h-[39px] w-[328px] items-center rounded border border-[#c2c0c2] bg-[#efefef] pl-[11px]">
    <svg class="h-[28px] w-[23px]" viewBox="0 0 23 28"><path d="M3 1h17l2.500 5v21.500H.5V6z" fill="#4f83cc" stroke="#2a5590"/><path d="M2 6h19L19 2H4z" fill="#9fc2ee"/><path d="M3.500 7.500h16v8h-16zM3.500 17h16v8h-16z" fill="#5f93d8" stroke="#2a5590"/><path d="M7.500 9v3h8V9M7.500 18.500v3h8v-3" fill="#eee" stroke="#444"/></svg>
    <span class="mt-px ml-[8px] w-[103px] whitespace-nowrap">analog_ic_hac</span>
  </div>
  <div class="ml-[6px] flex h-[39px] w-[329px] items-center rounded border border-[#c2c0c2] bg-[#efefef] pl-[8px] text-[#949799]">
    <svg class="h-[26px] w-[27px]" viewBox="0 0 27 26"><rect x=".7" y=".7" width="25.600" height="24.600" rx="1.500" fill="#d8d8d6" stroke="#bbb"/><rect x="2.500" y="3" width="22" height="18.500" fill="#858a87" stroke="#777"/><path d="M5 6l3 2-3 2M8.500 12.500h3.500" stroke="#eee" stroke-width="1.300" fill="none"/></svg>
    <span class="mt-px ml-[8px] w-[274px] whitespace-nowrap tracking-[-0.32px]">[rbchandra200@snps-analog-group-...</span>
  </div>
  <div class="ml-[6px] flex h-[39px] w-[330px] items-center rounded border border-[#b3b1b3] bg-[#cdcdcd] pl-[8px]">
    <svg class="h-[21px] w-[29px]"><use href="#biggate"/></svg>
    <span class="mt-px ml-[5px] w-[277px] whitespace-nowrap tracking-[0.21px]">55 cp_lib1 jkff symbol (Editing) - Sy...</span>
  </div>
  <div class="ml-[5px] flex h-[39px] w-[328px] items-center rounded border border-[#c2c0c2] bg-[#efefef] pl-[8px]">
    <svg class="h-[21px] w-[29px]"><use href="#biggate"/></svg>
    <span class="mt-px ml-[6px] w-[213px] whitespace-nowrap">33 Home - Custom Compiler</span>
  </div>
  <div class="mr-[17px] ml-auto flex gap-[4px]">
    <div class="mt-[2px] h-[31px] w-[66px] border-2 border-[#8a8a8a] bg-[#f7f7f7]"></div>
    <div class="h-[33px] w-[67px] border border-[#d0d0d0] bg-[#dedede]"></div>
    <div class="h-[33px] w-[67px] border border-[#d0d0d0] bg-[#dedede]"></div>
    <div class="h-[33px] w-[67px] rounded-r border border-[#d0d0d0] bg-[#dedede]"></div>
  </div>
</div>

<!-- downloads bar -->
<div class="flex h-[70px] items-center font-['Open_Sans',sans-serif] text-[15px] text-[#3c4043]">
  <svg class="ml-[28px] h-[18px] w-[15px]" viewBox="0 0 15 18"><path d="M.6.6h10L14.400 4v13.400H.6z" fill="#fafafa" stroke="#8a8a8a" stroke-width="1.200"/><path d="M2.500 4h7M2.500 6.500h10M2.500 9h10M2.500 11.500h10M2.500 14h10" stroke="#9a9a9a"/><path d="M10.500.6V4h4" fill="none" stroke="#8a8a8a"/></svg>
  <span class="ml-[18px] w-[112px] whitespace-nowrap tracking-[0.08px]">README.md.txt</span>
  <svg class="ml-[88px] h-[8px] w-[11px]" viewBox="0 0 11 8"><path d="M1 7l4.500-5L10 7" fill="none" stroke="#5f6368" stroke-width="2"/></svg>
  <div class="ml-[23px] h-[55px] w-px bg-[#c8c8c8]"></div>
  <div class="ml-auto flex h-[40px] w-[98px] items-center rounded-[5px] border border-[#d4d6da] pl-[18px] text-[#1a6be8]"><span class="w-[58px] whitespace-nowrap">Show all</span></div>
  <svg class="mr-[17px] ml-[15px] size-[12px] text-[#5f6368]"><use href="#x"/></svg>
</div>

<!-- system taskbar -->
<div class="flex h-[61px] items-center border-t border-[#cfcdd0] bg-[linear-gradient(90deg,#d7dce8_0px,#d8dde8_75px,#e2e6cf_115px,#e2e6cf_160px,#d8dbe8_205px,#d8dbe8_260px,#e3e2d2_300px,#f5e9b8_345px,#f5e8c2_410px,#f0dfc8_490px,#efdad2_590px,#dbdbe4_640px,#e5ded2_700px,#f8edbb_780px,#f8edbd_810px,#efdfd4_870px,#e7d4e7_920px,#ead9dc_980px,#d8e0ee_1030px,#d8e0ee_1090px,#e4d8de_1130px,#ecd6d8_1180px,#e6d5de_1310px,#f0dcd0_1410px,#ecd9da_1470px,#dedcea_1520px,#dbd9e8_1920px)] font-['Open_Sans',sans-serif] text-[15px] text-[#1b1b1b]">
  <div class="ml-[631px] grid h-[60px] w-[660px] grid-cols-12 items-center justify-items-center">
    <svg class="h-[30px] w-[30px]" viewBox="0 0 30 30"><path d="M0 1.500Q0 0 1.500 0H14.300v14.300H0zM15.500 0H28.500Q30 0 30 1.500V14.300H15.500zM0 15.500h14.300V30H1.500Q0 30 0 28.500zM15.500 15.500H30v13Q30 30 28.500 30h-13z" fill="url(#gWin)"/></svg>
    <svg class="h-[30px] w-[29px]" viewBox="0 0 29 30"><circle cx="16.500" cy="12" r="10.700" fill="#ffffff30" stroke="#222" stroke-width="2.600"/><path d="M9 20l-7.500 8" stroke="#222" stroke-width="3.400"/></svg>
    <svg class="h-[30px] w-[30px]" viewBox="0 0 30 30"><rect y="9" width="23" height="20" rx="1.500" fill="#272727"/><rect x="8" y="1" width="22" height="20" rx="1.500" fill="#fafafa" fill-opacity=".85"/><path d="M8 9h15v12H8z" fill="#b9b9b9"/></svg>
    <svg class="h-[30px] w-[30px]" viewBox="0 0 30 30"><rect y="1" width="30" height="28" rx="2" fill="#0c62b4"/><rect x="3" y="4" width="10.500" height="22" rx="1" fill="#fff"/><rect x="16" y="4" width="11" height="12" rx="1" fill="#5fd3fb"/><rect x="16" y="16" width="11" height="10" rx="1" fill="#1592f2"/></svg>
    <svg class="h-[30px] w-[30px]" viewBox="0 0 30 30"><path d="M1 29l2-6A14.200 14.200 0 1 1 15 29z" fill="#5a5cc8"/><path d="M15 1a14 14 0 0 1 13.500 13C29 23 22 29 15 29l-3-2C20 20 22 8 15 1z" fill="#7a66d8"/><rect x="7" y="10" width="11" height="11" rx="2" fill="#fff"/><path d="M19.500 13.500L24 11v9l-4.500-2.500z" fill="#fff"/></svg>
    <svg class="h-[28px] w-[28px]" viewBox="0 0 28 28"><path d="M11 20h6v6h-6z" fill="#88939c"/><path d="M8 26h12" stroke="#56616a" stroke-width="2"/><rect x=".5" y="2.500" width="27" height="19" rx="1" fill="#1585b4" stroke="#4e5f6a"/><path d="M1 3h26L12 21H1z" fill="#2ab9ca"/></svg>
    <div class="relative flex size-[48px] items-center justify-center rounded-[5px] border border-[#e5dfe2] bg-white/60">
      <svg class="h-[28px] w-[28px]" viewBox="0 0 28 28"><circle cx="14" cy="14" r="14" fill="#fbc116"/><path d="M14 14L2 7a14 14 0 0 1 24.100 0z" fill="#e33b2e"/><path d="M14 14L2 7a14 14 0 0 0 10.500 21L19.500 17z" fill="#2da94f"/><path d="M14 7.500h12.300A14 14 0 0 1 12.500 28L20 16z" fill="#fcc31c"/><circle cx="14" cy="14" r="6.500" fill="#fff"/><circle cx="14" cy="14" r="5.200" fill="#4286f4"/></svg>
      <div class="absolute bottom-0 left-[13px] h-[4px] w-[20px] rounded-full bg-[#a0673a]"></div>
    </div>
    <div class="relative">
      <svg class="h-[30px] w-[30px]" viewBox="0 0 30 30"><circle cx="15" cy="15" r="15" fill="#1b86d8"/><path d="M1 11C4 3 10 0 15 0c9 0 15 6 15 13 0 4-3 7-8 7-4 0-6-2-4-4 1-3-1-6-5-6C8 9 3 10 0 16z" fill="#35c1b1"/><path d="M20 1c6 2 10 7 10 12 0 4-3 7-8 7-4 0-6-2-4-4 2-5 6-8 2-15z" fill="#5fdc6a"/><path d="M9 14c-1 9 6 14 17 10-3 4-7 6-11 6C8 30 5 22 9 14z" fill="#0f4c92"/><path d="M18.500 15c-1 3 1 5 4 5 3 0 5-1 7-3-1 4-4 6-8 6-5 0-8-4-7-8z" fill="#dfe6f0"/></svg>
      <div class="absolute -bottom-[8px] left-[11px] h-[4px] w-[8px] rounded-full bg-[#85868c]"></div>
    </div>
    <div class="relative">
      <svg class="h-[30px] w-[31px]" viewBox="0 0 31 30"><path d="M0 2h10l3 3v6H0z" fill="#dd9a07"/><path d="M0 6h12l2-1h17v22q0 1-1 1H0z" fill="#fdcb3e"/><path d="M6 28v-6q0-2 2-2h15q2 0 2 2v6z" fill="#1273ca"/><path d="M10 24.500h12" stroke="#0c4d8c" stroke-width="1.500"/></svg>
      <div class="absolute -bottom-[8px] left-[11px] h-[4px] w-[8px] rounded-full bg-[#85868c]"></div>
    </div>
    <svg class="h-[28px] w-[30px]" viewBox="0 0 30 28"><path d="M0 11L15 0l15 11v4H0z" fill="#0c55a4"/><path d="M3 10h24v9H3z" fill="#f4f4f4"/><path d="M0 11l15 9 15-9v17H0z" fill="#1a93e0"/><path d="M30 11v17L15 19z" fill="#55c8f4"/></svg>
    <div class="flex h-[30px] w-[30px] flex-col items-center bg-white/30"><div class="h-[5px] w-[28px] border border-black bg-[#0000f0]"></div><span class="font-['Liberation_Sans',sans-serif] text-[29px] leading-[26px] font-bold text-black">M</span></div>
    <div class="relative">
      <svg class="h-[30px] w-[24px]" viewBox="0 0 24 30"><rect x="1" y="2" width="22" height="26" rx="2" fill="#56c4dc"/><path d="M1 28.500h22" stroke="#9b4b14" stroke-width="2.500"/><path d="M4 0v4M8 0v4M12 0v4M16 0v4M20 0v4" stroke="#0f6785" stroke-width="2"/><path d="M5 9.500h14M5 14h14M5 18.500h10" stroke="#0f6785" stroke-width="1.800"/></svg>
      <div class="absolute -bottom-[8px] left-[8px] h-[4px] w-[8px] rounded-full bg-[#85868c]"></div>
    </div>
  </div>
  <svg class="ml-auto h-[9px] w-[16px]" viewBox="0 0 16 9"><path d="M.7 8.300L8 1l7.300 7.300" fill="none" stroke="#1b1b1b" stroke-width="1.400"/></svg>
  <div class="ml-[20px] flex w-[30px] flex-col items-center pb-[3px] leading-5"><span class="whitespace-nowrap tracking-[-0.5px]">ENG</span><span class="whitespace-nowrap tracking-[-0.5px]">IN</span></div>
  <svg class="ml-[22px] h-[15px] w-[20px]" viewBox="0 0 20 15"><path d="M.7 5.500a13 13 0 0 1 18.600 0M3.500 8.300a9.300 9.300 0 0 1 13 0M6.300 11a5.300 5.300 0 0 1 7.400 0" fill="none" stroke="#1b1b1b" stroke-width="1.400"/><circle cx="10" cy="13.200" r="1.800" fill="#1b1b1b"/></svg>
  <svg class="ml-[10px] h-[16px] w-[20px]" viewBox="0 0 20 16"><path d="M.8 5.500h3L8 1.500v13l-4.200-4h-3z" fill="none" stroke="#1b1b1b" stroke-width="1.400"/><path d="M10.500 5.500c1.500 1.500 1.500 3.500 0 5" stroke="#1b1b1b" stroke-width="1.300" fill="none"/><path d="M13 3.500c2.500 2.500 2.500 6.500 0 9M15.500 1c4 4 4 10 0 14" stroke="#a5a3ae" stroke-width="1.200" fill="none"/></svg>
  <svg class="ml-[10px] h-[13px] w-[20px]" viewBox="0 0 20 13"><rect x=".8" y=".8" width="16" height="11.400" rx="2.500" fill="none" stroke="#1b1b1b" stroke-width="1.500"/><rect x="3" y="3" width="8.500" height="7" fill="#1b1b1b"/><path d="M18.500 4v5" stroke="#1b1b1b" stroke-width="2.400"/></svg>
  <div class="ml-[15px] flex w-[79px] flex-col items-end pb-[3px] leading-5"><span class="whitespace-nowrap tracking-[-0.5px]">17:40</span><span class="whitespace-nowrap tracking-[-0.45px]">01-03-2022</span></div>
  <div class="mr-[25px] ml-[15px] flex size-[20px] items-center justify-center rounded-full bg-[#a0673a] text-[13px] leading-none text-white">2</div>
</div>
</body>
</html>
